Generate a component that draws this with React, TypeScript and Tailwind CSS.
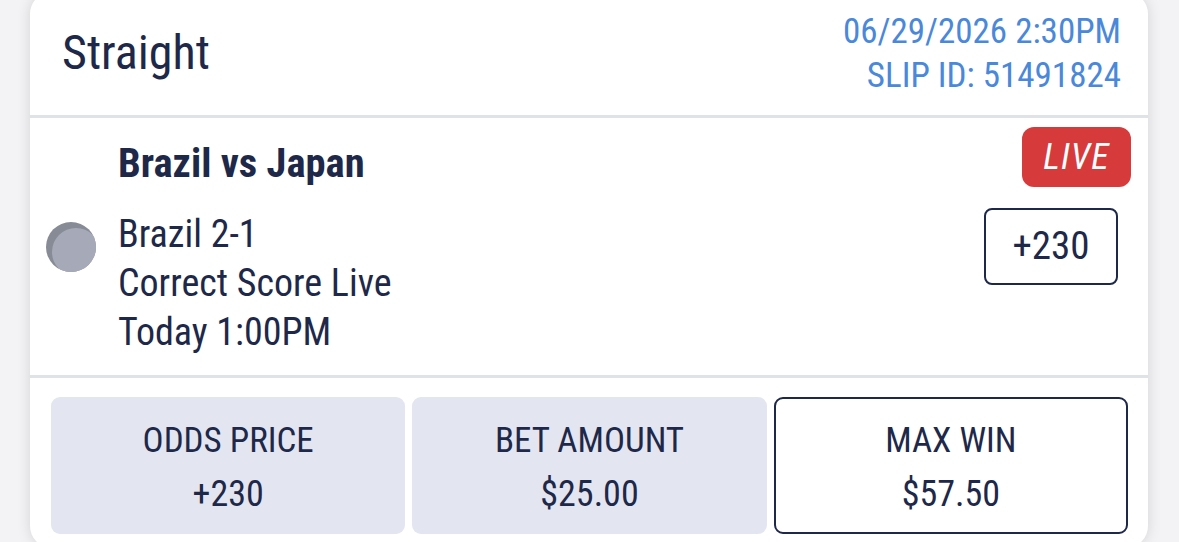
import React from 'react'

const font = { fontFamily: "'Roboto Condensed', Roboto, 'Liberation Sans', sans-serif" }

function TeamDot() {
  return (
    <svg width="50" height="50" viewBox="0 0 50 50" className="shrink-0">
      <defs>
        <clipPath id="dot-clip">
          <circle cx="25" cy="25" r="25" />
        </clipPath>
      </defs>
      <circle cx="25" cy="25" r="25" fill="#878b96" />
      <circle cx="30" cy="30" r="24" fill="#a6aab8" clipPath="url(#dot-clip)" />
    </svg>
  )
}

function StatBox({ label, value, outlined }: { label: string; value: string; outlined?: boolean }) {
  return (
    <div
      className={
        outlined
          ? 'flex flex-col items-center h-[137px] pt-[20px] rounded-[9px] border-[2.5px] border-[#1e2848] bg-white'
          : 'flex flex-col items-center h-[137px] pt-[22px] rounded-[9px] bg-[#e3e6f0]'
      }
    >
      <p className="text-[35px] leading-[44px] text-[#1e2848]">{label}</p>
      <p className="text-[36px] leading-[44px] mt-[9px] text-[#1e2848]">{value}</p>
    </div>
  )
}

export default function App() {
  return (
    <div className="w-[1179px] h-[542px] overflow-hidden bg-[#f3f3f5]" style={font}>
      <div className="ml-[30px] mt-[-8px] w-[1118px] h-[556px] bg-white rounded-[22px] shadow-[0_0_14px_rgba(0,0,0,0.13)] flex flex-col">
        {/* Header */}
        <div className="flex items-start justify-between pl-[32px] pr-[27px] pt-[18px] h-[126px] border-b-[3px] border-[#dfe3e8]">
          <h1 className="text-[48px] leading-[56px] mt-[15px] text-[#1e2848]">Straight</h1>
          <div className="text-right text-[35px] leading-[44px] text-[#4a88d9]">
            <p>06/29/2026 2:30PM</p>
            <p>SLIP ID: 51491824</p>
          </div>
        </div>

        {/* Bet line */}
        <div className="flex justify-between h-[260px] border-b-[3px] border-[#dfe3e8]">
          <div className="pl-[16px] pt-[20px]">
            <p className="pl-[72px] text-[40.5px] leading-[50px] font-bold text-[#1e2848]">Brazil vs Japan</p>
            <div className="flex items-start gap-[22px] mt-[22px]">
              <div className="mt-[12px]">
                <TeamDot />
              </div>
              <div className="text-[38px] leading-[49px] text-[#1e2848]">
                <p>Brazil 2-1</p>
                <p>Correct Score Live</p>
                <p>Today 1:00PM</p>
              </div>
            </div>
          </div>
          <div className="flex flex-col items-end pt-[9px] pr-[17px]">
            <div className="w-[109px] h-[60px] rounded-[12px] bg-[#d63a3b] flex items-center justify-center">
              <span className="text-[36px] italic tracking-[1px] text-white leading-none">LIVE</span>
            </div>
            <div className="mt-[21px] mr-[13px] w-[134px] h-[77px] rounded-[8px] border-[2.5px] border-[#1e2848] flex items-center justify-center">
              <span className="text-[39px] leading-none text-[#1e2848]">+230</span>
            </div>
          </div>
        </div>

        {/* Totals */}
        <div className="grid grid-cols-3 gap-[7px] pl-[21px] pr-[20px] pt-[19px]">
          <StatBox label="ODDS PRICE" value="+230" />
          <StatBox label="BET AMOUNT" value="$25.00" />
          <StatBox label="MAX WIN" value="$57.50" outlined />
        </div>
      </div>
    </div>
  )
}
